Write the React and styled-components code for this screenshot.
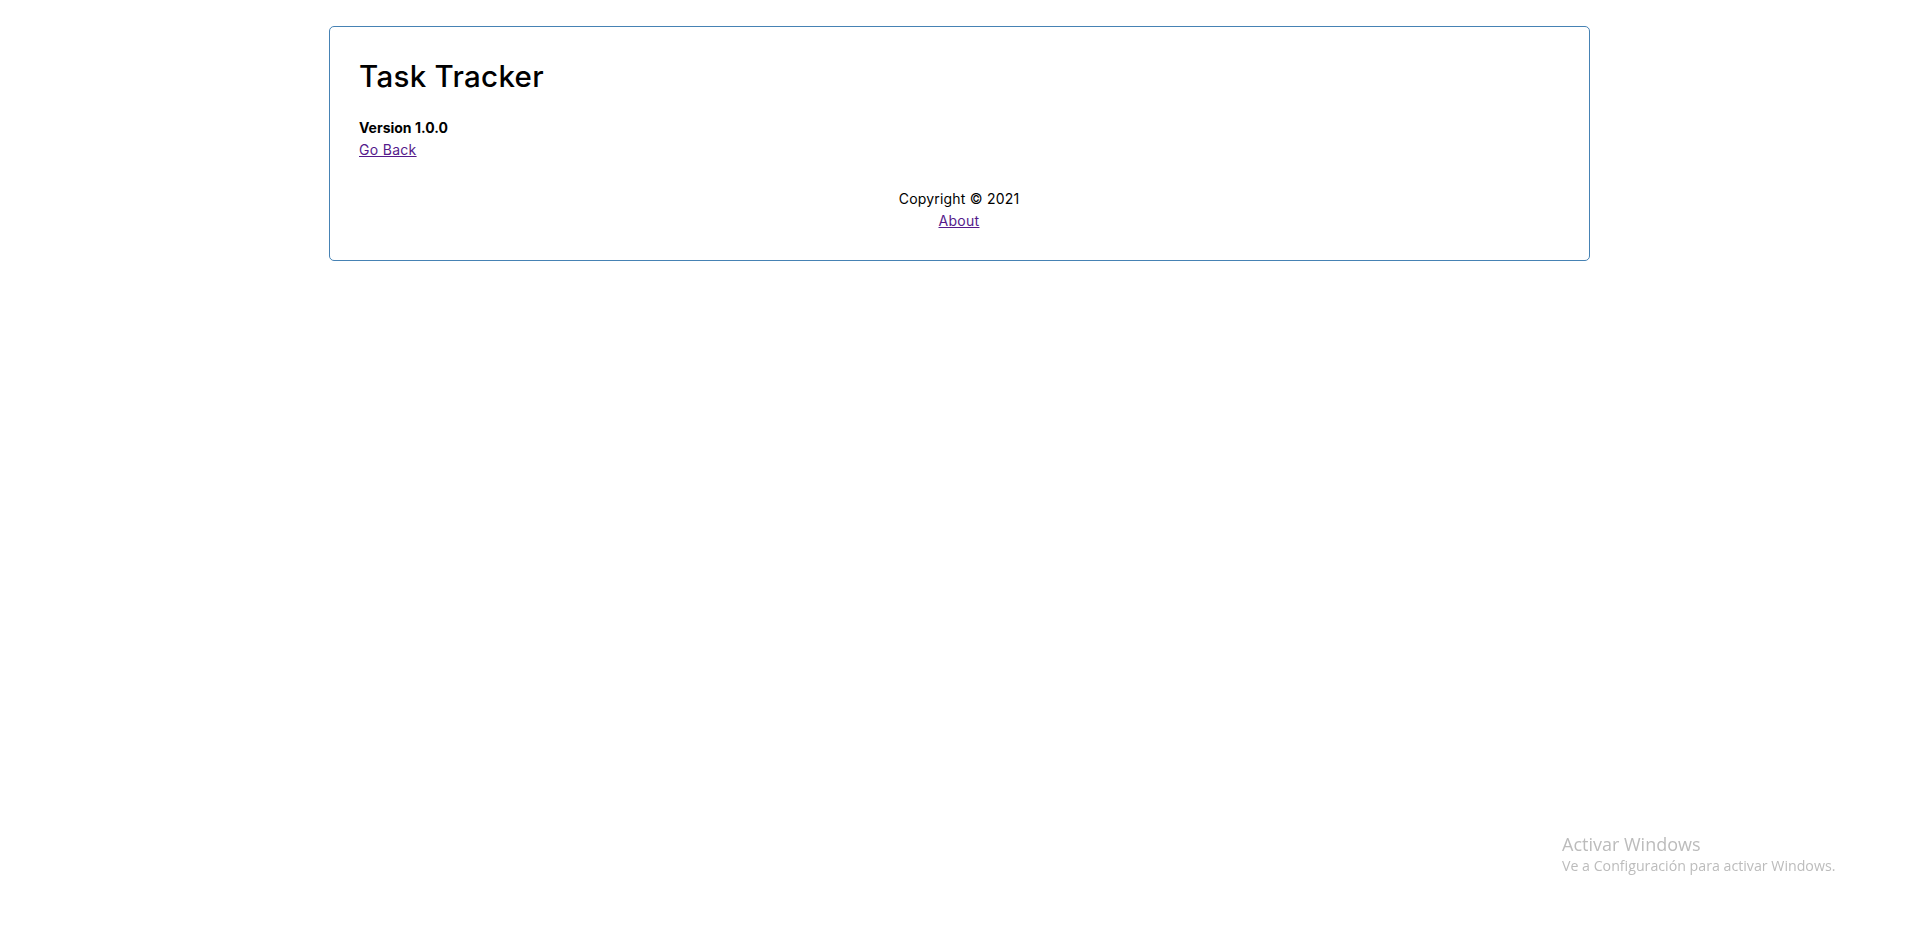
import React from "react";
import styled, { createGlobalStyle } from "styled-components";

const GlobalStyle = createGlobalStyle`
  * {
    box-sizing: border-box;
  }
  body {
    margin: 0;
    background: #fff;
    font-family: 'Inter', 'Noto Sans', sans-serif;
    color: #000;
  }
`;

const Container = styled.div`
  width: 1261px;
  margin: 26px 0 0 329px;
  padding: 30px 30px 28px 29px;
  border: 1px solid steelblue;
  border-radius: 5px;
`;

const Title = styled.h1`
  margin: 0;
  font-size: 29.5px;
  line-height: 38px;
  font-weight: 500;
  letter-spacing: 0.3px;
`;

const AboutBody = styled.div`
  margin-top: 22px;
`;

const Version = styled.h4`
  margin: 0;
  font-size: 14px;
  line-height: 22px;
  font-weight: 700;
`;

const Link = styled.a`
  display: inline-block;
  font-size: 14px;
  line-height: 22px;
  letter-spacing: 0.3px;
  color: #551a8b;
  text-decoration: underline;
  cursor: pointer;
`;

const Footer = styled.footer`
  margin-top: 27px;
  text-align: center;
  font-size: 14px;
  line-height: 22px;
  letter-spacing: 0.2px;
`;

const FooterText = styled.p`
  margin: 0;
`;

const Watermark = styled.div`
  position: fixed;
  left: 1562px;
  top: 832px;
  font-family: 'Open Sans', 'Noto Sans', sans-serif;
  color: #bcbcbc;
`;

const WatermarkTitle = styled.div`
  font-size: 18px;
  line-height: 24px;
`;

const WatermarkSub = styled.div`
  font-size: 14.2px;
  line-height: 20px;
`;

export default function App() {
  return (
    <>
      <GlobalStyle />
      <Container>
        <Title>Task Tracker</Title>
        <AboutBody>
          <Version>Version 1.0.0</Version>
          <Link href="#">Go Back</Link>
        </AboutBody>
        <Footer>
          <FooterText>Copyright © 2021</FooterText>
          <Link href="#">About</Link>
        </Footer>
      </Container>
      <Watermark>
        <WatermarkTitle>Activar Windows</WatermarkTitle>
        <WatermarkSub>Ve a Configuración para activar Windows.</WatermarkSub>
      </Watermark>
    </>
  );
}
